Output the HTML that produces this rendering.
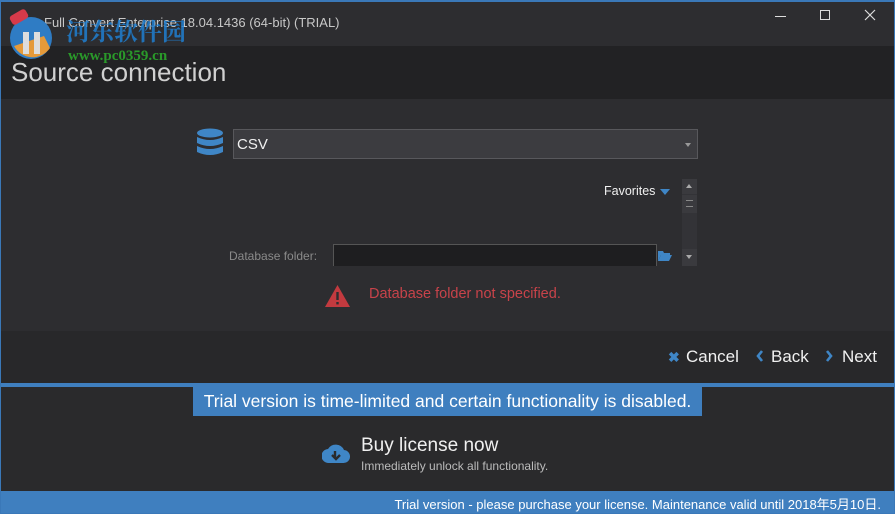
<!DOCTYPE html>
<html><head><meta charset="utf-8"><style>
*{margin:0;padding:0;box-sizing:border-box}
body{width:895px;height:514px;overflow:hidden;background:#2d2d30;font-family:"Liberation Sans","Noto Sans CJK SC",sans-serif;position:relative}
.abs{position:absolute}
</style></head><body>
<div class="abs" style="left:1px;top:2px;width:893px;height:44px;background:#2d2d30"></div>
<div class="abs" style="left:44px;top:15px;color:#c8c8c8;font-size:13px">Full Convert Enterprise 18.04.1436 (64-bit) (TRIAL)</div>
<div class="abs" style="left:1px;top:46px;width:893px;height:53px;background:#222224"></div>
<div class="abs" style="left:11px;top:57px;color:#d0d0d0;font-size:26px;font-weight:300">Source connection</div>
<svg class="abs" style="left:4px;top:6px" width="58" height="56"><circle cx="27" cy="32" r="21" fill="#2f7cc4"/><path d="M10 40 A21 21 0 0 0 46 42 L40 30 Z" fill="#e59a3a"/><rect x="19" y="26" width="6" height="22" fill="#ddd"/><rect x="30" y="26" width="6" height="22" fill="#ddd"/><rect x="6" y="6" width="18" height="10" rx="3" fill="#d63a4a" transform="rotate(-30 15 11)"/></svg>
<div class="abs" style="left:66px;top:12px;color:#1f7fd0;font-size:24px;font-weight:bold;font-family:'Noto Serif CJK SC',serif;opacity:.85">河东软件园</div>
<div class="abs" style="left:68px;top:48px;color:#2a9a2a;font-size:15px;font-weight:bold;font-family:'Liberation Serif',serif">www.pc0359.cn</div>
<div class="abs" style="left:775px;top:16px;width:11px;height:1px;background:#ddd"></div>
<div class="abs" style="left:820px;top:10px;width:10px;height:10px;border:1px solid #ddd"></div>
<svg class="abs" style="left:864px;top:9px" width="12" height="12"><path d="M1 1L11 11M11 1L1 11" stroke="#ddd" stroke-width="1.2"/></svg>
<svg class="abs" style="left:196px;top:128px" width="28" height="32"><g fill="#3f86c6"><ellipse cx="14" cy="5" rx="13" ry="4.5"/><path d="M1 9 Q14 15 27 9 V15 Q14 21 1 15Z"/><path d="M1 18 Q14 24 27 18 V24 Q14 30 1 24Z"/></g></svg>
<div class="abs" style="left:233px;top:129px;width:465px;height:30px;background:#3c3c40;border:1px solid #58585c"></div>
<div class="abs" style="left:237px;top:136px;color:#f0f0f0;font-size:15px">CSV</div>
<div class="abs" style="left:685px;top:143px;border-left:3px solid transparent;border-right:3px solid transparent;border-top:4px solid #999"></div>
<div class="abs" style="left:604px;top:184px;color:#f0f0f0;font-size:12.5px">Favorites</div>
<div class="abs" style="left:660px;top:189px;border-left:5px solid transparent;border-right:5px solid transparent;border-top:6px solid #3f86c6"></div>
<div class="abs" style="left:682px;top:179px;width:15px;height:87px;background:#333337"></div>
<div class="abs" style="left:682px;top:179px;width:15px;height:15px;background:#3a3a3e"></div>
<div class="abs" style="left:686px;top:184px;border-left:3px solid transparent;border-right:3px solid transparent;border-bottom:4px solid #aaa"></div>
<div class="abs" style="left:682px;top:195px;width:15px;height:18px;background:#3a3a3e"></div>
<div class="abs" style="left:686px;top:200px;width:7px;height:7px;border-top:1px solid #888;border-bottom:1px solid #888"></div>
<div class="abs" style="left:682px;top:249px;width:15px;height:17px;background:#3a3a3e"></div>
<div class="abs" style="left:686px;top:255px;border-left:3px solid transparent;border-right:3px solid transparent;border-top:4px solid #aaa"></div>
<div class="abs" style="left:229px;top:249px;color:#8a8a8a;font-size:12px">Database folder:</div>
<div class="abs" style="left:333px;top:244px;width:324px;height:22px;background:#1e1e20;border:1px solid #555;border-bottom:none"></div>
<svg class="abs" style="left:658px;top:250px" width="14" height="11"><path d="M0 1H5L6 3H12V5H3L0 11Z" fill="#3f86c6"/><path d="M3 5H14L11 11H0Z" fill="#3f86c6"/></svg>
<svg class="abs" style="left:324px;top:284px" width="27" height="24"><path d="M13.5 1L26 23H1Z" fill="#c23a3f"/><rect x="12.3" y="8" width="2.4" height="8" fill="#2d2d30"/><rect x="12.3" y="18" width="2.4" height="2.4" fill="#2d2d30"/></svg>
<div class="abs" style="left:369px;top:286px;color:#c8434a;font-size:14.5px">Database folder not specified.</div>
<div class="abs" style="left:1px;top:331px;width:893px;height:52px;background:#28282a"></div>
<div class="abs" style="left:668px;top:349px;color:#3f86c6;font-size:14px;font-weight:bold">✖</div>
<div class="abs" style="left:686px;top:347px;color:#f0f0f0;font-size:17px">Cancel</div>
<svg class="abs" style="left:755px;top:349px" width="10" height="14"><path d="M7 2L3 7L7 12" stroke="#3f86c6" stroke-width="2.6" fill="none"/></svg>
<div class="abs" style="left:771px;top:347px;color:#f0f0f0;font-size:17px">Back</div>
<svg class="abs" style="left:824px;top:349px" width="10" height="14"><path d="M3 2L7 7L3 12" stroke="#3f86c6" stroke-width="2.6" fill="none"/></svg>
<div class="abs" style="left:842px;top:347px;color:#f0f0f0;font-size:17px">Next</div>
<div class="abs" style="left:1px;top:383px;width:893px;height:4px;background:#3f7fbf"></div>
<div class="abs" style="left:1px;top:387px;width:893px;height:104px;background:#2a2a2c"></div>
<div class="abs" style="left:193px;top:387px;width:509px;height:29px;background:#3f7fbf;color:#fff;font-size:17.5px;text-align:center;line-height:29px;white-space:nowrap">Trial version is time-limited and certain functionality is disabled.</div>
<svg class="abs" style="left:322px;top:441px" width="28" height="24"><path d="M7 22A7 7 0 0 1 6 8A9 9 0 0 1 22 9A6.5 6.5 0 0 1 21 22Z" fill="#3f86c6"/><path d="M13 10V16M10 14L14 18L18 14" stroke="#2a2a2c" stroke-width="2.4" fill="none"/></svg>
<div class="abs" style="left:361px;top:435px;color:#f0f0f0;font-size:19px">Buy license now</div>
<div class="abs" style="left:361px;top:459px;color:#bbb;font-size:12px">Immediately unlock all functionality.</div>
<div class="abs" style="left:1px;top:491px;width:893px;height:22px;background:#3f7fbf"></div>
<div class="abs" style="right:14px;top:494px;color:#fff;font-size:13px;white-space:nowrap">Trial version - please purchase your license. Maintenance valid until 2018年5月10日.</div>
<div class="abs" style="left:0;top:0;width:895px;height:514px;border:1px solid #3a78b8;border-top:2px solid #3a78b8"></div>
</body></html>
